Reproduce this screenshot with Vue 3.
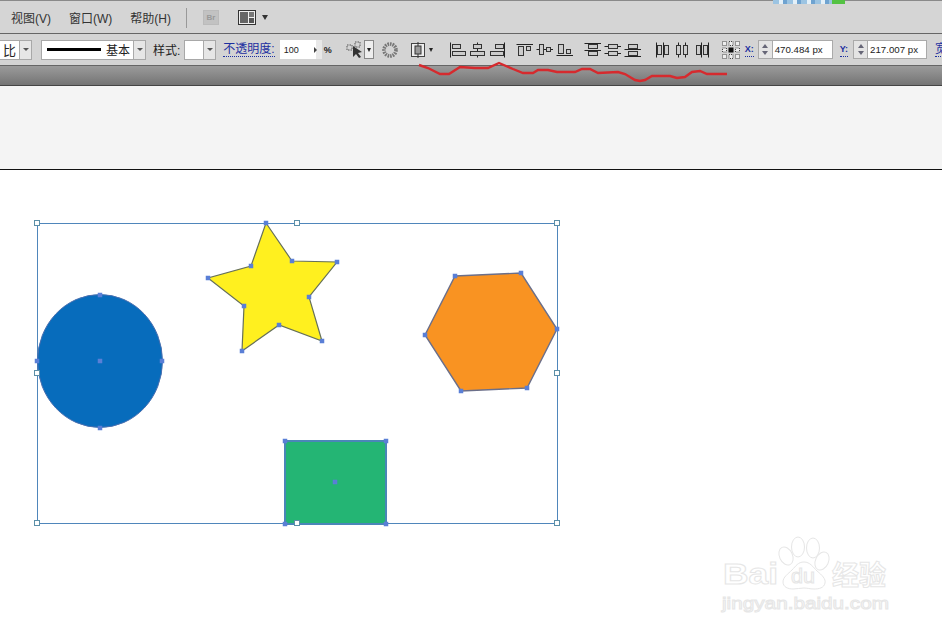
<script setup>
// 对齐图标：line = 参考线，bars = 灰色小方块
const alignGroups = [
  [
    { lines: [[1, 1, 1, 16]], bars: [[3, 3, 8, 4], [3, 10, 13, 4]] },
    { lines: [[8, 1, 8, 16]], bars: [[4, 3, 8, 4], [1, 10, 14, 4]] },
    { lines: [[15, 1, 15, 16]], bars: [[6, 3, 8, 4], [1, 10, 13, 4]] }
  ],
  [
    { lines: [[0, 3, 17, 3]], bars: [[2, 5, 5, 9], [10, 5, 4, 4]] },
    { lines: [[0, 8, 17, 8]], bars: [[3, 3, 4, 10], [10, 6, 4, 4]] },
    { lines: [[0, 14, 17, 14]], bars: [[2, 3, 5, 9], [10, 8, 4, 4]] }
  ],
  [
    { lines: [[0, 2, 17, 2], [0, 9, 17, 9]], bars: [[4, 3, 9, 4], [4, 10, 9, 4]] },
    { lines: [[0, 5, 17, 5], [0, 12, 17, 12]], bars: [[4, 3, 9, 4], [4, 10, 9, 4]] },
    { lines: [[0, 8, 17, 8], [0, 15, 17, 15]], bars: [[4, 3, 9, 4], [4, 10, 9, 4]] }
  ],
  [
    { lines: [[1, 1, 1, 16], [8, 1, 8, 16]], bars: [[2, 4, 4, 9], [9, 4, 4, 9]] },
    { lines: [[3, 1, 3, 16], [10, 1, 10, 16]], bars: [[1, 4, 4, 9], [8, 4, 4, 9]] },
    { lines: [[6, 1, 6, 16], [13, 1, 13, 16]], bars: [[1, 4, 4, 9], [8, 4, 4, 9]] }
  ]
]

const redLine = '419,65 428,68 440,74 449,74 460,67 475,68 488,68 499,63 513,69 523,73 533,73 538,70 548,70 557,72 575,72 582,69 590,69 598,73 618,72 625,74 635,80 640,81 645,80 652,76 670,76 677,78 685,77 692,72 700,71 707,74 727,74'

const handles = [[37, 223], [297, 223], [557, 223], [37, 373], [557, 373], [37, 523], [297, 523], [557, 523]]

const star = [[266, 223], [292, 261], [337, 262], [309, 297], [322, 341], [279, 325], [242, 351], [244, 306], [208, 278], [251, 266]]
const hexagon = [[455, 276], [521, 273], [557, 329], [527, 388], [461, 391], [425, 335]]
const square = [[285, 441], [386, 441], [386, 524], [285, 524]]
const circlePoints = [[100, 295], [162, 361], [100, 428], [37, 361], [100, 361]]

const anchors = [...star, ...hexagon, ...square, ...circlePoints, [335, 482]]
const toPoints = (list) => list.map((p) => p.join(',')).join(' ')
</script>

<template>
  <div class="page">
    <header class="menu-bar">
      <span class="menu-item">视图(V)</span>
      <span class="menu-item">窗口(W)</span>
      <span class="menu-item">帮助(H)</span>
      <i class="menu-sep"></i>
      <span class="br-icon">Br</span>
      <svg class="layout-icon" width="18" height="15" viewBox="0 0 18 15">
        <rect x="0.5" y="0.5" width="17" height="14" fill="#eee" stroke="#333" />
        <rect x="2" y="2" width="8" height="11" fill="#666" />
        <rect x="11" y="2" width="5" height="5" fill="#777" />
        <rect x="11" y="8" width="5" height="5" fill="#555" />
      </svg>
      <i class="arrow-down"></i>
    </header>

    <div class="options-bar">
      <div class="combo combo-ratio">
        <span class="combo-value ratio-text">比</span>
        <span class="combo-btn"><i class="arrow-small"></i></span>
      </div>
      <div class="combo combo-stroke">
        <span class="combo-value stroke-value"><i class="stroke-line"></i>基本</span>
        <span class="combo-btn"><i class="arrow-small"></i></span>
      </div>
      <span class="label style-label">样式:</span>
      <div class="combo combo-style">
        <span class="combo-value"></span>
        <span class="combo-btn"><i class="arrow-small"></i></span>
      </div>
      <span class="label link opacity-label">不透明度:</span>
      <div class="opacity-input">100<i class="arrow-right"></i></div>
      <span class="percent">%</span>

      <svg class="wand" width="17" height="18" viewBox="0 0 17 18">
        <g fill="none" stroke="#555" stroke-dasharray="1.5 1">
          <rect x="1" y="4" width="5" height="5" />
          <rect x="9" y="1" width="5" height="5" />
        </g>
        <path d="M7 5l0 11 3-3 3 4 2-1-3-4 4-1z" fill="#333" />
      </svg>
      <span class="wand-btn"><i class="arrow-tiny"></i></span>

      <svg class="spinner" width="16" height="16" viewBox="0 0 16 16">
        <circle cx="8" cy="8" r="6" fill="none" stroke="#777" stroke-width="3.6" stroke-dasharray="1.6 0.9" />
      </svg>

      <svg class="align-target" width="14" height="16" viewBox="0 0 14 16">
        <rect x="0.5" y="1.5" width="13" height="13" fill="#eee" stroke="#444" />
        <path d="M7 0v16" stroke="#333" />
        <rect x="4" y="4" width="6" height="8" fill="#999" stroke="#333" />
      </svg>
      <i class="arrow-tiny align-arrow"></i>

      <div v-for="(group, g) in alignGroups" :key="g" class="align-group" :class="'group-' + g">
        <svg v-for="(icon, i) in group" :key="i" width="17" height="17" viewBox="0 0 17 17">
          <line
            v-for="(l, n) in icon.lines"
            :key="n"
            :x1="l[0] + 0.5" :y1="l[1] + 0.5" :x2="l[2] + 0.5" :y2="l[3] + 0.5"
            stroke="#222"
          />
          <rect
            v-for="(b, n) in icon.bars"
            :key="'b' + n"
            :x="b[0] + 0.5" :y="b[1] + 0.5" :width="b[2]" :height="b[3]"
            fill="#ccc"
            stroke="#333"
          />
        </svg>
      </div>

      <svg class="ref-point" width="18" height="18" viewBox="0 0 18 18">
        <g fill="#eee" stroke="#444" stroke-dasharray="1 1">
          <rect x="0.5" y="0.5" width="4" height="4" />
          <rect x="7" y="0.5" width="4" height="4" />
          <rect x="13.5" y="0.5" width="4" height="4" />
          <rect x="0.5" y="7" width="4" height="4" />
          <rect x="13.5" y="7" width="4" height="4" />
          <rect x="0.5" y="13.5" width="4" height="4" />
          <rect x="7" y="13.5" width="4" height="4" />
          <rect x="13.5" y="13.5" width="4" height="4" />
        </g>
        <rect x="6.5" y="6.5" width="5" height="5" fill="#111" />
      </svg>

      <span class="label link coord-x">X:</span>
      <div class="coord-input x-input">
        <span class="stepper"><i class="up"></i><i class="down"></i></span>
        <span class="coord-value">470.484 px</span>
      </div>
      <span class="label link coord-y">Y:</span>
      <div class="coord-input y-input">
        <span class="stepper"><i class="up"></i><i class="down"></i></span>
        <span class="coord-value">217.007 px</span>
      </div>
      <span class="label link width-label">宽</span>
    </div>

    <div class="doc-tabs"></div>
    <div class="panel-strip"></div>

    <main class="canvas">
      <svg width="942" height="467" viewBox="0 170 942 467">
        <rect x="37.5" y="223.5" width="520" height="300" fill="none" stroke="#4f86bb" />
        <ellipse cx="100" cy="361" rx="62.5" ry="66.5" fill="#076cbc" stroke="#4a6fb0" />
        <polygon :points="toPoints(star)" fill="#fff01f" stroke="#66705a" stroke-width="1.2" />
        <polygon :points="toPoints(hexagon)" fill="#f99322" stroke="#6b6f8a" stroke-width="1.4" />
        <polygon :points="toPoints(square)" fill="#24b574" stroke="#4a86b8" stroke-width="2" />

        <rect
          v-for="(h, i) in handles"
          :key="i"
          :x="h[0] - 2.5" :y="h[1] - 2.5"
          width="5" height="5"
          fill="#fff"
          stroke="#5b8fa8"
        />
        <rect
          v-for="(a, i) in anchors"
          :key="'a' + i"
          :x="a[0] - 2.25" :y="a[1] - 2.25"
          width="4.5" height="4.5"
          fill="#5a7fd6"
        />

        <!-- 水印 -->
        <g class="watermark">
          <ellipse cx="786" cy="556" rx="6.5" ry="9.5" transform="rotate(-25 786 556)" />
          <ellipse cx="798" cy="547" rx="6.5" ry="10" />
          <ellipse cx="813" cy="548" rx="6.5" ry="10" />
          <ellipse cx="822" cy="561" rx="6.5" ry="9.5" transform="rotate(25 822 561)" />
          <path d="M804 562c6 0 9 5 13 9 5 4 9 8 8 12-1 5-6 6-11 6-4 0-7-1-10-1-4 0-7 1-11 1-5 0-10-2-10-7 0-5 5-8 9-12 4-4 6-8 12-8z" />
          <text x="723" y="584" font-size="30" font-weight="700" textLength="55" lengthAdjust="spacingAndGlyphs">Bai</text>
          <text x="791" y="583" font-size="20" textLength="24" lengthAdjust="spacingAndGlyphs">du</text>
          <text x="832" y="585" font-size="27" font-weight="700" class="wm-cjk">经验</text>
          <text x="722" y="609" font-size="17" textLength="167" lengthAdjust="spacingAndGlyphs">jingyan.baidu.com</text>
        </g>
      </svg>
    </main>

    <!-- 盖在工具栏上的内容 -->
    <div class="logo-scrap"></div>
    <svg class="annotation" width="942" height="90" viewBox="0 0 942 90">
      <polyline :points="redLine" fill="none" stroke="#d62a2e" stroke-width="2.4" />
    </svg>
  </div>
</template>

<style>
html,
body {
  margin: 0;
  background: #fff;
}
</style>

<style scoped>
.page {
  position: relative;
  width: 942px;
  height: 637px;
  overflow: hidden;
  background: #fff;
  font-family: "Liberation Sans", "Noto Sans CJK SC", sans-serif;
  font-size: 12px;
  color: #222;
}

.menu-bar {
  display: flex;
  align-items: center;
  box-sizing: border-box;
  height: 34px;
  padding: 1px 0 0 11px;
  background: #d5d5d5;
  border-top: 1px solid #8a8a8a;
  border-bottom: 1px solid #666;
}

.menu-item {
  margin-right: 18px;
  color: #333;
  white-space: nowrap;
}

.menu-sep {
  width: 1px;
  height: 20px;
  margin-left: -3px;
  background: #999;
}

.br-icon {
  display: flex;
  align-items: center;
  justify-content: center;
  width: 16px;
  height: 15px;
  margin-left: 16px;
  background: #c2c2c2;
  border: 1px solid #bbb;
  box-sizing: border-box;
  color: #999;
  font-size: 8px;
  font-weight: 700;
}

.layout-icon {
  margin-left: 19px;
}

.arrow-down {
  width: 0;
  height: 0;
  margin-left: 6px;
  border: 3.5px solid transparent;
  border-top: 5px solid #333;
  border-bottom: 0;
}

.options-bar {
  display: flex;
  align-items: center;
  height: 31px;
  background: #d4d4d4;
  white-space: nowrap;
}

.combo {
  display: flex;
  box-sizing: border-box;
  height: 20px;
  flex: none;
  border: 1px solid #a8a8a8;
  background: #fff;
}

.combo-value {
  flex: 1;
  display: flex;
  align-items: center;
  overflow: hidden;
}

.combo-btn {
  display: flex;
  align-items: center;
  justify-content: center;
  width: 11px;
  background: #e6e6e6;
  border-left: 1px solid #aaa;
}

.combo-ratio {
  width: 32px;
  border-left: 0;
}

.ratio-text {
  justify-content: flex-end;
  padding-right: 3px;
  font-size: 13px;
}

.combo-stroke {
  width: 105px;
  margin-left: 9px;
}

.stroke-value {
  font-size: 12px;
}

.stroke-line {
  width: 54px;
  height: 3px;
  margin: 0 5px;
  background: #000;
}

.combo-style {
  width: 32px;
  margin-left: 4px;
}

.arrow-small {
  width: 0;
  height: 0;
  border: 3px solid transparent;
  border-top: 3px solid #555;
  border-bottom: 0;
}

.label {
  flex: none;
  font-size: 12px;
}

.style-label {
  margin-left: 7px;
}

.link {
  color: #1c2fa0;
  border-bottom: 1px dotted #1c2fa0;
  line-height: 14px;
}

.opacity-label {
  margin-left: 7px;
}

.opacity-input {
  display: flex;
  align-items: center;
  justify-content: space-between;
  box-sizing: border-box;
  flex: none;
  width: 42px;
  height: 19px;
  margin-left: 5px;
  padding: 0 5px 0 4px;
  background: linear-gradient(to right, #fff 36px, #e8e8e8 36px);
  font-size: 9px;
}

.arrow-right {
  width: 0;
  height: 0;
  border: 3px solid transparent;
  border-left: 3px solid #444;
  border-right: 0;
}

.percent {
  flex: none;
  width: 11px;
  margin-left: 2px;
  font-size: 9px;
  font-weight: 700;
}

.wand {
  flex: none;
  margin-left: 11px;
}

.wand-btn {
  display: flex;
  align-items: center;
  justify-content: center;
  flex: none;
  width: 8px;
  height: 17px;
  margin-left: 1px;
  background: #eee;
  border: 1px solid #888;
  box-sizing: content-box;
}

.arrow-tiny {
  width: 0;
  height: 0;
  flex: none;
  border: 2.5px solid transparent;
  border-top: 4px solid #222;
  border-bottom: 0;
}

.spinner {
  flex: none;
  margin-left: 8px;
}

.align-target {
  flex: none;
  margin-left: 13px;
}

.align-arrow {
  margin-left: 4px;
}

.align-group {
  display: flex;
  flex: none;
  gap: 3px;
}

.group-0 {
  margin-left: 16px;
}

.group-1 {
  margin-left: 10px;
}

.group-2 {
  margin-left: 11px;
}

.group-3 {
  margin-left: 14px;
}

.ref-point {
  flex: none;
  margin-left: 10px;
}

.coord-x {
  margin-left: 5px;
  font-size: 9px;
  font-weight: 700;
}

.coord-y {
  margin-left: 7px;
  font-size: 9px;
  font-weight: 700;
}

.coord-input {
  display: flex;
  align-items: center;
  box-sizing: border-box;
  flex: none;
  height: 19px;
  background: #fff;
  border: 1px solid #aaa;
}

.x-input {
  width: 75px;
  margin-left: 4px;
}

.y-input {
  width: 74px;
  margin-left: 5px;
}

.stepper {
  display: flex;
  flex-direction: column;
  align-items: center;
  justify-content: center;
  gap: 3px;
  width: 13px;
  height: 100%;
  background: #e4e4e4;
  border-right: 1px solid #aaa;
}

.up,
.down {
  width: 0;
  height: 0;
  border: 3px solid transparent;
}

.up {
  border-bottom: 4px solid #667;
  border-top: 0;
}

.down {
  border-top: 4px solid #667;
  border-bottom: 0;
}

.coord-value {
  margin-left: 2px;
  font-size: 9.7px;
  color: #222;
}

.width-label {
  margin-left: 8px;
}

.doc-tabs {
  box-sizing: border-box;
  height: 21px;
  background: linear-gradient(to bottom, #9b9b9b, #747474);
  border-top: 1px solid #666;
  border-bottom: 1px solid #444;
}

.panel-strip {
  box-sizing: border-box;
  height: 84px;
  background: #f4f4f4;
  border-bottom: 1px solid #111;
}

.canvas {
  height: 467px;
  background: #fff;
}

.canvas svg {
  display: block;
}

.watermark {
  fill: #fff;
  stroke: #e6e6e6;
  stroke-width: 1;
  font-family: "Liberation Sans", sans-serif;
}

.wm-cjk {
  font-family: "Noto Sans CJK SC", sans-serif;
}

.logo-scrap {
  position: absolute;
  top: 0;
  left: 773px;
  width: 59px;
  height: 4px;
  background: repeating-linear-gradient(to right, #9cc4e2 0 6px, #e4f0f8 6px 10px, #6fa3d0 10px 14px);
  border-right: 13px solid #54c243;
}

.annotation {
  position: absolute;
  top: 0;
  left: 0;
  pointer-events: none;
}
</style>
